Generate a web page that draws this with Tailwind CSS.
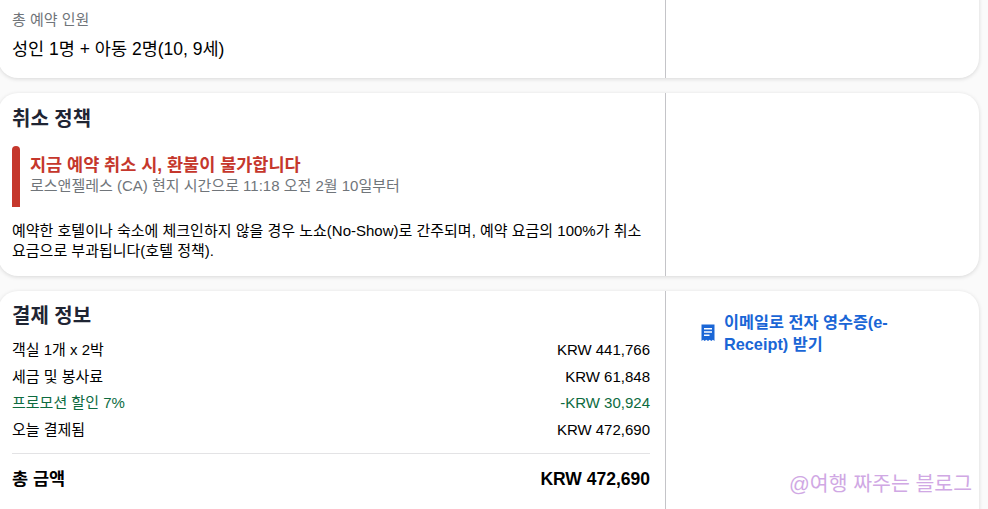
<!DOCTYPE html>
<html lang="ko">
<head>
<meta charset="utf-8">
<script src="https://cdn.jsdelivr.net/npm/@tailwindcss/browser@4"></script>
</head>
<body class="m-0">
<div class="relative w-[988px] h-[509px] overflow-hidden bg-[#fafafa] font-['Liberation_Sans','Noto_Sans_CJK_KR',sans-serif] text-black">
  <div class="flex flex-col gap-[15px] w-[981px] -ml-[2px] -mt-[20px]">
    <section class="flex h-[98px] bg-white rounded-[20px] shadow-[0_1px_4px_rgba(0,0,0,0.14)]">
      <div class="w-[668px] border-r border-[#c4c4c8] pl-[14px] pt-[30px]">
        <p class="text-[15px] leading-[20px] text-[#70757a]">총 예약 인원</p>
        <p class="mt-[9px] text-[17.5px] leading-[20px]">성인 1명 + 아동 2명(10, 9세)</p>
      </div>
      <div class="flex-1"></div>
    </section>
    <section class="flex h-[183px] bg-white rounded-[20px] shadow-[0_1px_4px_rgba(0,0,0,0.14)]">
      <div class="w-[668px] border-r border-[#c4c4c8] pl-[14px] pr-[20px] pt-[13px]">
        <h2 class="text-[20px] leading-[26px] font-bold text-[#1f2533]">취소 정책</h2>
        <div class="flex mt-[14px] h-[61px]">
          <div class="w-[8px] rounded-t-[4px] bg-[#c5372c]"></div>
          <div class="pl-[10px] pt-[8px]">
            <p class="text-[17.5px] leading-[22px] font-bold text-[#c5372c]">지금 예약 취소 시, 환불이 불가합니다</p>
            <p class="text-[15px] leading-[20px] text-[#70757a]">로스앤젤레스 (CA) 현지 시간으로 11:18 오전 2월 10일부터</p>
          </div>
        </div>
        <p class="mt-[14px] text-[15px] leading-[20px]">예약한 호텔이나 숙소에 체크인하지 않을 경우 노쇼(No-Show)로 간주되며, 예약 요금의 100%가 취소 요금으로 부과됩니다(호텔 정책).</p>
      </div>
      <div class="flex-1"></div>
    </section>
    <section class="flex h-[240px] bg-white rounded-[20px] shadow-[0_1px_4px_rgba(0,0,0,0.14)]">
      <div class="w-[668px] border-r border-[#c4c4c8] pl-[14px] pr-[15px] pt-[12px]">
        <h2 class="text-[20px] leading-[26px] font-bold text-[#1f2533]">결제 정보</h2>
        <div class="mt-[11px] flex flex-col gap-[6.5px] text-[15px] leading-[20px]">
          <div class="flex justify-between"><span>객실 1개 x 2박</span><span>KRW 441,766</span></div>
          <div class="flex justify-between"><span>세금 및 봉사료</span><span>KRW 61,848</span></div>
          <div class="flex justify-between text-[#0d6b3f]"><span>프로모션 할인 7%</span><span>-KRW 30,924</span></div>
          <div class="flex justify-between"><span>오늘 결제됨</span><span>KRW 472,690</span></div>
        </div>
        <div class="mt-[13px] border-t border-[#e3e3e5] pt-[14px] flex justify-between text-[17.5px] leading-[22px] font-bold">
          <span>총 금액</span><span>KRW 472,690</span>
        </div>
      </div>
      <div class="flex-1 pl-[34px] pt-[20px]">
        <a class="flex items-center gap-[8px] w-[200px] text-[#1a66d6] text-[16.3px] leading-[22px] font-bold">
          <svg class="w-[16px] h-[18px] shrink-0 -mt-[1px]" viewBox="0 0 16 18" fill="currentColor"><path fill-rule="evenodd" d="M1.500 0.500h13V17l-1.600-1.300-1.600 1.300-1.600-1.300L8 17l-1.700-1.300L4.700 17l-1.600-1.300L1.500 17z M4 4v1.500h8V4z M4 7.200v1.500h8V7.200z M4 10.400v1.500h5.500v-1.500z"/></svg>
          <span>이메일로 전자 영수증(e-Receipt) 받기</span>
        </a>
      </div>
    </section>
  </div>
  <div class="absolute left-[789px] top-[471px] text-[20.5px] leading-[26px] text-[#d0a8e4] whitespace-nowrap">@여행 짜주는 블로그</div>
</div>
</body>
</html>
